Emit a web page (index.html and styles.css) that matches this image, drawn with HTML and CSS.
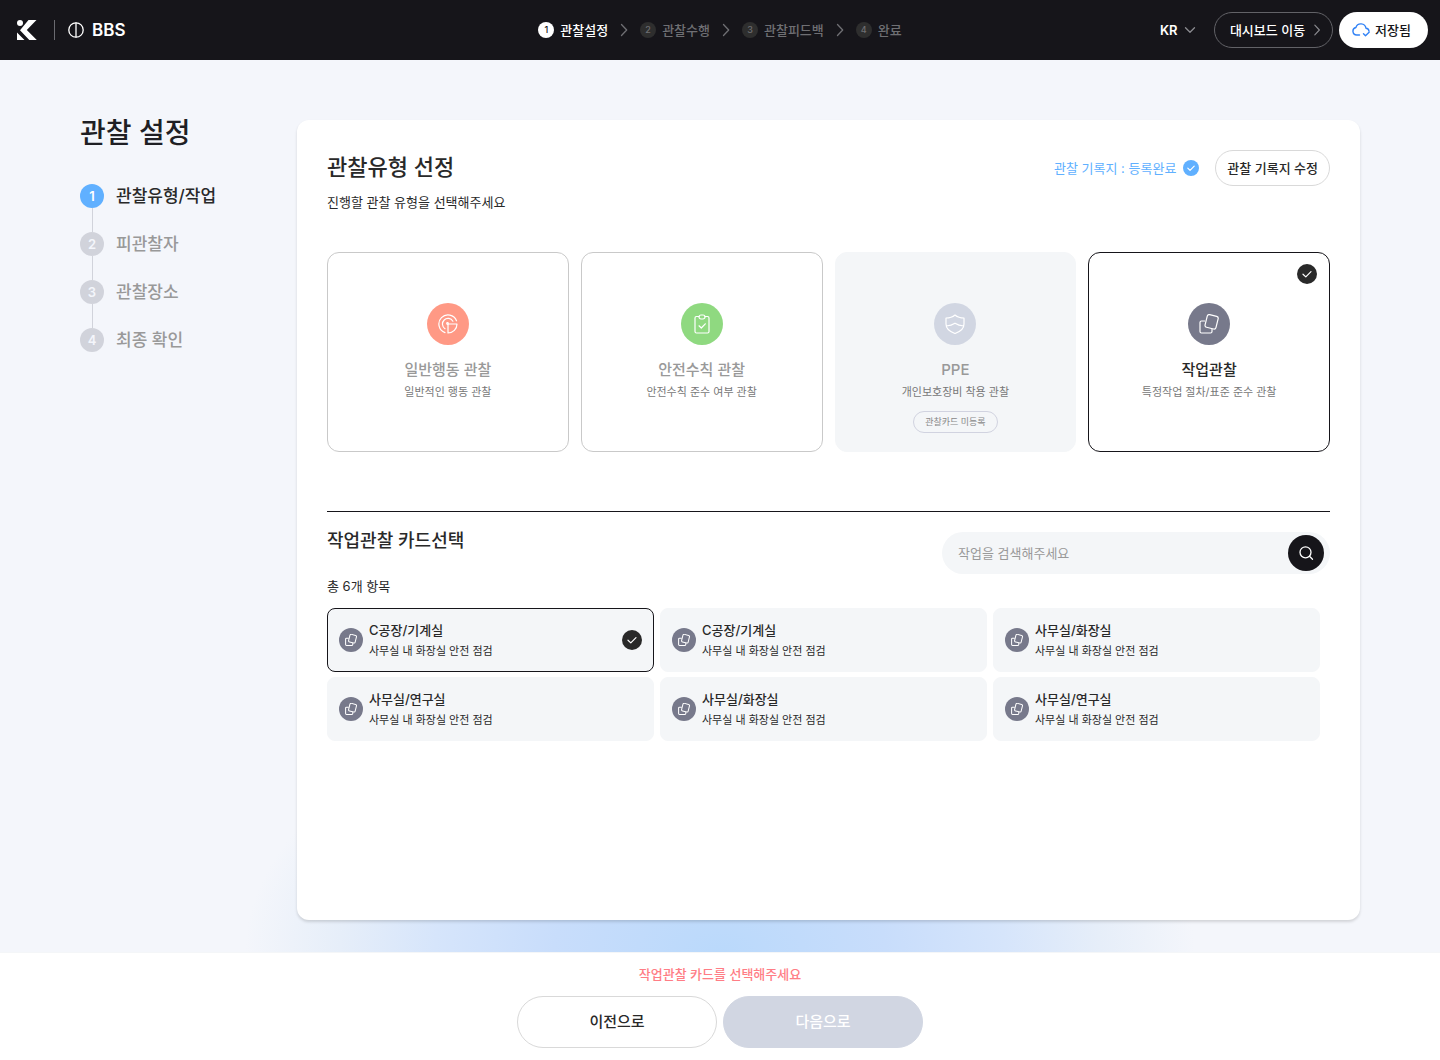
FILE: index.html
```html
<!DOCTYPE html>
<html lang="ko">
<head>
<meta charset="utf-8">
<meta name="viewport" content="width=device-width, initial-scale=1">
<title>BBS 관찰 설정</title>
<link rel="stylesheet" href="styles.css">
</head>
<body>
<svg class="sprite" aria-hidden="true">
  <symbol id="chevron-right" viewBox="0 0 16 16"><path d="M5.500 2.500l5.200 5.500-5.200 5.500"/></symbol>
  <symbol id="chevron-down" viewBox="0 0 16 16"><path d="M3.500 5.800L8 10.300l4.500-4.500"/></symbol>
  <symbol id="check" viewBox="0 0 20 20"><path d="M6 10.200l2.800 2.700 5.200-5.300"/></symbol>
  <symbol id="squares" viewBox="0 0 20 20"><rect x="7" y="1.300" width="11.200" height="13" rx="2" transform="rotate(14 12.600 7.800)"/><path d="M5.600 7H2.500a1.500 1.500 0 0 0-1.500 1.500v9a1.500 1.500 0 0 0 1.500 1.500h9a1.500 1.500 0 0 0 1.500-1.500v-2.200"/></symbol>
  <symbol id="radar" viewBox="0 0 20 20"><path d="M10 10h9a9 9 0 0 1-9 9zM18.500 6.800A9.100 9.100 0 1 0 7 18.600M14.900 7.200A5.600 5.600 0 1 0 7 14.700"/><circle cx="9.500" cy="9.500" r=".8"/></symbol>
  <symbol id="clipboard" viewBox="0 0 20 20"><path d="M7 2.500H4.500A1.500 1.500 0 0 0 3 4v13.500A1.500 1.500 0 0 0 4.500 19h11a1.500 1.500 0 0 0 1.500-1.500V4a1.500 1.500 0 0 0-1.500-1.500H13"/><rect x="7" y="1" width="6" height="4" rx="2"/><path d="M7 11.800l2.300 2.200 4-4.200"/></symbol>
  <symbol id="shield" viewBox="0 0 20 20"><path d="M10 1c2.300 2 5.200 3 9 3v6c0 4-3 7.400-9 9.500C4 17.400 1 14 1 10V4c3.800 0 6.700-1 9-3zM1.300 12c3.500-.3 6.300-1.200 8.700-2.800 2.400 1.600 5.200 2.500 8.700 2.800"/></symbol>
</svg>

<header class="topbar">
  <a class="brand" href="#">
    <svg class="brand-mark" viewBox="0 0 20 20" aria-hidden="true"><circle cx="3" cy="3" r="3"/><path d="M11.500 0H19.500L9.800 10 19.800 20H12.300L3 10.200zM0 12.500L7.500 20H0z"/></svg>
    <span class="brand-line"></span>
    <svg class="brand-sub" viewBox="0 0 16 16" aria-hidden="true"><circle cx="8" cy="8" r="7.200"/><path d="M8 1v14"/></svg>
    <span class="brand-name">BBS</span>
  </a>
  <ol class="flow">
    <li class="flow-step flow-step-on"><span class="flow-num">1</span>관찰설정</li>
    <li class="flow-step"><svg class="flow-arrow"><use href="#chevron-right"/></svg><span class="flow-num">2</span>관찰수행</li>
    <li class="flow-step"><svg class="flow-arrow"><use href="#chevron-right"/></svg><span class="flow-num">3</span>관찰피드백</li>
    <li class="flow-step"><svg class="flow-arrow"><use href="#chevron-right"/></svg><span class="flow-num">4</span>완료</li>
  </ol>
  <div class="tools">
    <div class="lang">
      <select class="lang-select" aria-label="언어"><option>KR</option><option>EN</option></select>
      <svg class="lang-arrow"><use href="#chevron-down"/></svg>
    </div>
    <button class="pill pill-dark" type="button">대시보드 이동<svg class="pill-arrow"><use href="#chevron-right"/></svg></button>
    <button class="pill pill-saved" type="button"><svg class="cloud" viewBox="0 0 18 16" aria-hidden="true"><path d="M7.500 13H4.800A3.800 3.800 0 0 1 3.900 5.500 5.200 5.200 0 0 1 14 6.200 3.200 3.200 0 0 1 17 9.200M11.500 11.800l2 2 3.600-3.600"/></svg>저장됨</button>
  </div>
</header>

<main class="page">
  <nav class="side" aria-label="관찰 설정 단계">
    <h1 class="side-title">관찰 설정</h1>
    <ol class="steps">
      <li class="step step-on"><span class="step-num">1</span>관찰유형/작업</li>
      <li class="step"><span class="step-num">2</span>피관찰자</li>
      <li class="step"><span class="step-num">3</span>관찰장소</li>
      <li class="step"><span class="step-num">4</span>최종 확인</li>
    </ol>
  </nav>

  <section class="panel">
    <div class="panel-head">
      <div>
        <h2 class="panel-title">관찰유형 선정</h2>
        <p class="panel-desc">진행할 관찰 유형을 선택해주세요</p>
      </div>
      <div class="record">
        <span class="record-state">관찰 기록지 : 등록완료</span>
        <svg class="record-check" viewBox="0 0 20 20"><use href="#check"/></svg>
        <button class="pill pill-light" type="button">관찰 기록지 수정</button>
      </div>
    </div>

    <div class="types" role="radiogroup" aria-label="관찰유형">
      <label class="type">
        <input class="pick" type="radio" name="type">
        <span class="type-icon type-icon-red"><svg><use href="#radar"/></svg></span>
        <span class="type-name">일반행동 관찰</span>
        <span class="type-desc">일반적인 행동 관찰</span>
      </label>
      <label class="type">
        <input class="pick" type="radio" name="type">
        <span class="type-icon type-icon-green"><svg><use href="#clipboard"/></svg></span>
        <span class="type-name">안전수칙 관찰</span>
        <span class="type-desc">안전수칙 준수 여부 관찰</span>
      </label>
      <label class="type type-off">
        <input class="pick" type="radio" name="type" disabled>
        <span class="type-icon type-icon-pale"><svg><use href="#shield"/></svg></span>
        <span class="type-name">PPE</span>
        <span class="type-desc">개인보호장비 착용 관찰</span>
        <span class="type-tag">관찰카드 미등록</span>
      </label>
      <label class="type">
        <input class="pick" type="radio" name="type" checked>
        <svg class="tick type-tick"><use href="#check"/></svg>
        <span class="type-icon"><svg><use href="#squares"/></svg></span>
        <span class="type-name">작업관찰</span>
        <span class="type-desc">특정작업 절차/표준 준수 관찰</span>
      </label>
    </div>

    <div class="jobs-head">
      <h3 class="jobs-title">작업관찰 카드선택</h3>
      <form class="search" role="search">
        <input class="search-input" type="text" placeholder="작업을 검색해주세요" aria-label="작업 검색">
        <button class="search-button" type="button" aria-label="검색"><svg viewBox="0 0 16 16"><circle cx="7.500" cy="7.300" r="5.500"/><path d="M11.500 11.300l3 3"/></svg></button>
      </form>
    </div>
    <p class="jobs-count">총 6개 항목</p>
    <div class="jobs" role="radiogroup" aria-label="작업관찰 카드">
      <label class="job">
        <input class="pick" type="radio" name="job" checked>
        <span class="job-icon"><svg><use href="#squares"/></svg></span>
        <span class="job-text"><span class="job-name">C공장/기계실</span><span class="job-desc">사무실 내 화장실 안전 점검</span></span>
        <svg class="tick"><use href="#check"/></svg>
      </label>
      <label class="job">
        <input class="pick" type="radio" name="job">
        <span class="job-icon"><svg><use href="#squares"/></svg></span>
        <span class="job-text"><span class="job-name">C공장/기계실</span><span class="job-desc">사무실 내 화장실 안전 점검</span></span>
      </label>
      <label class="job">
        <input class="pick" type="radio" name="job">
        <span class="job-icon"><svg><use href="#squares"/></svg></span>
        <span class="job-text"><span class="job-name">사무실/화장실</span><span class="job-desc">사무실 내 화장실 안전 점검</span></span>
      </label>
      <label class="job">
        <input class="pick" type="radio" name="job">
        <span class="job-icon"><svg><use href="#squares"/></svg></span>
        <span class="job-text"><span class="job-name">사무실/연구실</span><span class="job-desc">사무실 내 화장실 안전 점검</span></span>
      </label>
      <label class="job">
        <input class="pick" type="radio" name="job">
        <span class="job-icon"><svg><use href="#squares"/></svg></span>
        <span class="job-text"><span class="job-name">사무실/화장실</span><span class="job-desc">사무실 내 화장실 안전 점검</span></span>
      </label>
      <label class="job">
        <input class="pick" type="radio" name="job">
        <span class="job-icon"><svg><use href="#squares"/></svg></span>
        <span class="job-text"><span class="job-name">사무실/연구실</span><span class="job-desc">사무실 내 화장실 안전 점검</span></span>
      </label>
    </div>
  </section>
</main>

<footer class="bottom">
  <p class="bottom-note">작업관찰 카드를 선택해주세요</p>
  <div class="bottom-actions">
    <button class="big" type="button">이전으로</button>
    <button class="big big-off" type="button" disabled>다음으로</button>
  </div>
</footer>
</body>
</html>
```
FILE: styles.css
```css
* { box-sizing: border-box; }

body {
  margin: 0;
  min-height: 100vh;
  display: flex;
  flex-direction: column;
  background: #f4f6fb;
  color: #292929;
  font-family: Inter, "Noto Sans CJK KR", sans-serif;
  font-size: 13px;
  line-height: 20px;
}

h1, h2, h3, p, ol { margin: 0; padding: 0; }
ol { list-style: none; }
button, input, select { font: inherit; color: inherit; border: 0; padding: 0; margin: 0; }
button { cursor: pointer; }
svg { flex: none; fill: none; stroke: currentColor; stroke-linecap: round; stroke-linejoin: round; }
.sprite { display: none; }

/* Top bar */
.topbar {
  height: 60px;
  padding: 0 12px;
  display: grid;
  grid-template-columns: 1fr auto 1fr;
  align-items: center;
  background: #16151a;
  color: #fff;
}
.brand { display: flex; align-items: center; padding-left: 5px; color: #fff; text-decoration: none; }
.brand-mark { width: 20px; height: 20px; fill: #fff; stroke: none; }
.brand-line { width: 1px; height: 20px; margin: 0 13px 0 17px; background: #6a6a70; }
.brand-sub { width: 16px; height: 16px; margin-right: 8px; stroke-width: 1.300; }
.brand-name { font-size: 17px; font-weight: 600; }

.flow { display: flex; }
.flow-step { display: flex; align-items: center; color: #6f6f73; font-weight: 500; }
.flow-step-on { color: #fff; }
.flow-num {
  width: 16px;
  height: 16px;
  margin-right: 6px;
  border-radius: 50%;
  background: #2e2e2e;
  font-size: 9px;
  line-height: 16px;
  text-align: center;
}
.flow-step-on .flow-num { background: #fff; color: #16151a; }
.flow-arrow { width: 16px; height: 16px; margin: 0 8px; stroke-width: 1.300; }

.tools { display: flex; justify-content: flex-end; align-items: center; gap: 6px; }
.lang { display: flex; align-items: center; margin-right: 10px; }
.lang-select { appearance: none; background: none; font-weight: 600; }
.lang-arrow { width: 16px; height: 16px; margin-left: 4px; color: #8b8b90; stroke-width: 1.300; }
.pill {
  height: 36px;
  display: flex;
  align-items: center;
  border: 1px solid transparent;
  border-radius: 18px;
  font-weight: 500;
  white-space: nowrap;
}
.pill-dark { padding: 0 8px 0 15px; gap: 5px; border-color: #626267; background: none; }
.pill-arrow { width: 14px; height: 14px; color: #8b8b90; stroke-width: 1.300; }
.pill-saved { padding: 0 16px 0 12px; gap: 5px; background: #fff; color: #16151a; }
.pill-light { padding: 0 11px; margin-left: 16px; border-color: #d9d9d9; background: #fff; }
.cloud { width: 18px; height: 16px; color: #3182f6; stroke-width: 1.400; }

/* Page body */
.page {
  flex: 1;
  display: flex;
  padding: 60px 80px 32px;
  background: radial-gradient(475px 270px at 50% 100%, #bad9fb 0%, #c8ddfb 35%, #d6e5fb 60%, #e6eef9 80%, #f4f6fb 100%);
}
.side { flex: none; width: 217px; }
.side-title { margin: -7px 0 31px; font-size: 28px; line-height: 40px; font-weight: 500; color: #1f1f24; }
.steps { display: flex; flex-direction: column; gap: 24px; }
.step {
  position: relative;
  display: flex;
  align-items: center;
  gap: 12px;
  font-size: 17px;
  line-height: 24px;
  font-weight: 500;
  color: #999;
}
.step-on { color: #292929; }
.step-num {
  width: 24px;
  height: 24px;
  border-radius: 50%;
  background: #d1d3db;
  color: #f4f6fb;
  font-size: 13px;
  font-weight: 600;
  text-align: center;
}
.step-on .step-num { background: #60b0ff; color: #fff; }
.step + .step::before {
  content: "";
  position: absolute;
  left: 12px;
  bottom: 24px;
  width: 1px;
  height: 24px;
  background: #d1d3db;
}

.panel {
  flex: 1;
  min-width: 0;
  padding: 30px;
  border-radius: 12px;
  background: #fff;
  box-shadow: 0 2px 3px rgba(0, 0, 0, .14);
}
.panel-head { display: flex; justify-content: space-between; align-items: flex-start; }
.panel-title { font-size: 22px; line-height: 34px; font-weight: 500; }
.panel-desc { margin-top: 8px; }
.record { display: flex; align-items: center; color: #60b0ff; }
.record .pill { color: #292929; }
.record-check { width: 16px; height: 16px; margin-left: 7px; border-radius: 50%; background: #60b0ff; color: #fff; stroke-width: 1.500; }

/* Observation types */
.types { display: grid; grid-template-columns: repeat(4, 1fr); gap: 12px; margin-top: 40px; }
.type {
  position: relative;
  height: 200px;
  padding-top: 50px;
  display: flex;
  flex-direction: column;
  align-items: center;
  border: 1px solid #c9c9c9;
  border-radius: 12px;
  color: #999;
}
.pick { position: absolute; opacity: 0; }
.type-off { border-color: #f4f6f8; background: #f4f6f8; }
.type:has(:checked) { border-color: #16151a; color: #292929; }
.type-icon {
  width: 42px;
  height: 42px;
  margin-bottom: 13px;
  display: grid;
  place-items: center;
  border-radius: 50%;
  background: #77798b;
  color: #fff;
}
.type-icon svg { width: 20px; height: 20px; stroke-width: 1.200; }
.type-icon-red { background: #ff9985; }
.type-icon-green { background: #8fd980; }
.type-icon-pale { background: #d1d6e2; }
.type-name { font-size: 15px; line-height: 24px; font-weight: 500; }
.type-desc { font-size: 11px; line-height: 20px; color: #777; }
.type-tag {
  margin-top: 9px;
  padding: 0 11px;
  border: 1px solid #d1d3e0;
  border-radius: 11px;
  font-size: 9px;
  line-height: 20px;
  color: #888;
}
.tick { width: 20px; height: 20px; border-radius: 50%; background: #292929; color: #fff; stroke-width: 1.200; }
.type-tick { position: absolute; top: 11px; right: 12px; }

/* Job cards */
.jobs-head {
  margin-top: 59px;
  padding-top: 20px;
  display: flex;
  justify-content: space-between;
  align-items: flex-start;
  border-top: 1px solid #16151a;
}
.jobs-title { margin-top: -5px; font-size: 18px; line-height: 28px; font-weight: 500; }
.search { flex: 0 1 388px; height: 42px; padding: 3px 6px 3px 16px; display: flex; border-radius: 21px; background: #f4f6f8; }
.search-input { flex: 1; min-width: 0; background: none; outline: 0; }
.search-input::placeholder { color: #999; opacity: 1; }
.search-button { width: 36px; height: 36px; display: grid; place-items: center; border-radius: 50%; background: #16151a; color: #fff; }
.search-button svg { width: 16px; height: 16px; stroke-width: 1.300; }
.jobs-count { margin: 2px 0 12px; }
.jobs { padding-right: 10px; display: grid; grid-template-columns: repeat(3, 1fr); gap: 5px 6px; }
.job {
  position: relative;
  height: 64px;
  padding: 0 11px;
  display: flex;
  align-items: center;
  gap: 6px;
  border: 1px solid #f4f6f8;
  border-radius: 8px;
  background: #f4f6f8;
}
.job:has(:checked) { border-color: #16151a; }
.job-icon { width: 24px; height: 24px; display: grid; place-items: center; border-radius: 50%; background: #77798b; color: #fff; }
.job-icon svg { width: 12px; height: 12px; stroke-width: 1.700; }
.job-text { flex: 1; display: flex; flex-direction: column; }
.job-name { font-weight: 500; line-height: 22px; }
.job-desc { font-size: 11px; line-height: 20px; }

/* Footer */
.bottom {
  padding: 11px 20px 12px;
  display: flex;
  flex-direction: column;
  align-items: center;
  background: #fff;
  border-top: 1px solid #f4f6f8;
}
.bottom-note { font-weight: 500; color: #ff7d85; margin-bottom: 12px; }
.bottom-actions { display: flex; gap: 6px; }
.big { width: 200px; height: 52px; border: 1px solid #d9d9d9; border-radius: 26px; background: #fff; font-size: 15px; font-weight: 500; }
.big-off { border-color: #d1d6e2; background: #d1d6e2; color: #fff; cursor: default; }
```
